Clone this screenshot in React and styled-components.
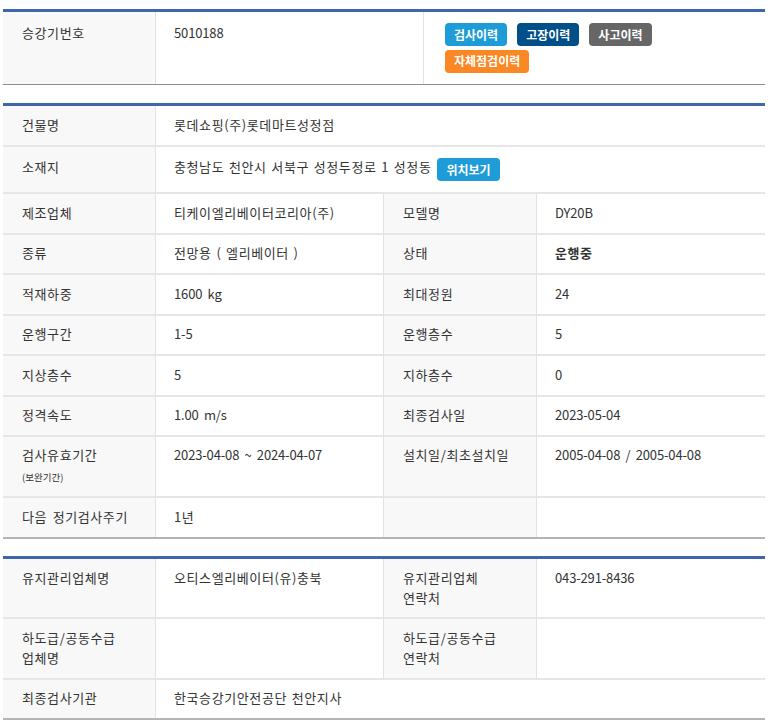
import React from "react";
import styled, { createGlobalStyle } from "styled-components";

const Global = createGlobalStyle`
  html, body { margin: 0; padding: 0; background: #fff; }
  body { font-family: "Noto Sans CJK KR", "Noto Sans", sans-serif; font-size: 13px; color: #333; }
`;
const Page = styled.div`
  width: 762px;
  padding: 9px 0 0 3px;
  display: flex;
  flex-direction: column;
`;
const Table = styled.table`
  width: 762px;
  table-layout: fixed;
  border-collapse: separate;
  border-spacing: 0;
  border-top: 3px solid #3f66a8;
  border-bottom: ${p => p.$thin ? "1px solid #8c8c8c" : "2px solid #b4b4b4"};
  margin-bottom: ${p => p.$gap || 0}px;
`;
const Row = styled.tr`
  height: ${p => p.$h}px;
`;
const Th = styled.th`
  background: #f8f8f8;
  font-weight: 400;
  color: #333;
  text-align: left;
  vertical-align: ${p => p.$top ? "top" : "middle"};
  padding: ${p => p.$top || 0}px 8px ${p => p.$top ? 0 : (p.$pb || 2)}px 19px;
  line-height: 20px;
  letter-spacing: 0.6px;
  word-spacing: 2px;
  border-right: 1px solid #e2e2e2;
  border-bottom: ${p => p.$last ? 0 : "2px solid #e6e6e6"};
  box-sizing: border-box;
`;
const Td = styled.td`
  color: #333;
  vertical-align: ${p => p.$top ? "top" : "middle"};
  padding: ${p => p.$top || 0}px 8px ${p => (p.$top || p.$flush) ? 0 : 2}px ${p => p.$left || 18}px;
  line-height: 20px;
  font-weight: ${p => p.$bold ? 700 : 400};
  letter-spacing: ${p => p.$num ? "-0.15px" : "0.6px"};
  word-spacing: ${p => p.$num ? 2.5 : 1.2}px;
  border-right: ${p => p.$split ? "1px solid #e2e2e2" : 0};
  border-bottom: ${p => p.$last ? 0 : "2px solid #e6e6e6"};
  box-sizing: border-box;
`;
const Small = styled.div`
  font-size: 9.5px;
  line-height: 14px;
  margin-top: 5px;
  letter-spacing: 0;
`;
const Buttons = styled.div`
  display: flex;
  flex-wrap: wrap;
  gap: 3.5px 10px;
  width: 250px;
`;
const Btn = styled.span`
  display: inline-flex;
  align-items: center;
  justify-content: center;
  height: 23px;
  padding: 0 9px;
  box-sizing: border-box;
  border-radius: 4px;
  color: #fff;
  font-size: 12px;
  font-weight: 700;
  line-height: 1;
  letter-spacing: 0;
  word-spacing: 0;
  background: ${p => p.$c};
`;
const AddressRow = styled.div`
  display: flex;
  align-items: flex-start;
  gap: 6px;
`;
const AddressText = styled.span`
  margin-top: -1px;
`;

const rows = [
  ["제조업체", "티케이엘리베이터코리아(주)", "모델명", "DY20B", 41, false, false, true],
  ["종류", "전망용 ( 엘리베이터 )", "상태", "운행중", 40, true],
  ["적재하중", "1600 kg", "최대정원", "24", 41, false, true, true],
  ["운행구간", "1-5", "운행층수", "5", 40, false, true, true],
  ["지상층수", "5", "지하층수", "0", 41, false, true, true],
  ["정격속도", "1.00 m/s", "최종검사일", "2023-05-04", 40, false, true, true],
];

export default function App() {
  return (
    <Page>
      <Global />
      <Table $thin $gap={18}>
        <colgroup><col width="153" /><col width="268" /><col /></colgroup>
        <tbody>
          <Row $h={72}>
            <Th $top={11} $last>승강기번호</Th>
            <Td $top={11} $last $split $num>5010188</Td>
            <Td $top={11} $last $left={21}>
              <Buttons>
                <Btn $c="#1e9cd8">검사이력</Btn>
                <Btn $c="#004f88">고장이력</Btn>
                <Btn $c="#666666">사고이력</Btn>
                <Btn $c="#fb8725">자체점검이력</Btn>
              </Buttons>
            </Td>
          </Row>
        </tbody>
      </Table>
      <Table $gap={17}>
        <colgroup><col width="153" /><col width="228" /><col width="153" /><col /></colgroup>
        <tbody>
          <Row $h={41}><Th>건물명</Th><Td colSpan={3}>롯데쇼핑(주)롯데마트성정점</Td></Row>
          <Row $h={47}>
            <Th $pb={5}>소재지</Th>
            <Td colSpan={3} $flush>
              <AddressRow>
                <AddressText>충청남도 천안시 서북구 성정두정로 1 성정동</AddressText>
                <Btn $c="#1e9cd8">위치보기</Btn>
              </AddressRow>
            </Td>
          </Row>
          {rows.map(([a, b, c, d, h, bold, numB, numD]) => (
            <Row key={a} $h={h}>
              <Th>{a}</Th><Td $split $num={numB}>{b}</Td><Th>{c}</Th><Td $bold={bold} $num={numD}>{d}</Td>
            </Row>
          ))}
          <Row $h={61}>
            <Th $top={8}>검사유효기간<Small>(보완기간)</Small></Th>
            <Td $top={8} $split $num>2023-04-08 ~ 2024-04-07</Td>
            <Th $top={8}>설치일/최초설치일</Th>
            <Td $top={8} $num>2005-04-08 / 2005-04-08</Td>
          </Row>
          <Row $h={39}>
            <Th $last>다음 정기검사주기</Th><Td $last $split>1년</Td><Th $last></Th><Td $last></Td>
          </Row>
        </tbody>
      </Table>
      <Table>
        <colgroup><col width="153" /><col width="228" /><col width="153" /><col /></colgroup>
        <tbody>
          <Row $h={60}>
            <Th $top={9}>유지관리업체명</Th><Td $top={9} $split>오티스엘리베이터(유)충북</Td>
            <Th $top={9}>유지관리업체<br />연락처</Th><Td $top={9} $num>043-291-8436</Td>
          </Row>
          <Row $h={61}>
            <Th $top={9}>하도급/공동수급<br />업체명</Th><Td $top={9} $split></Td>
            <Th $top={9}>하도급/공동수급<br />연락처</Th><Td $top={9}></Td>
          </Row>
          <Row $h={38}>
            <Th $last>최종검사기관</Th><Td $last colSpan={3}>한국승강기안전공단 천안지사</Td>
          </Row>
        </tbody>
      </Table>
    </Page>
  );
}
